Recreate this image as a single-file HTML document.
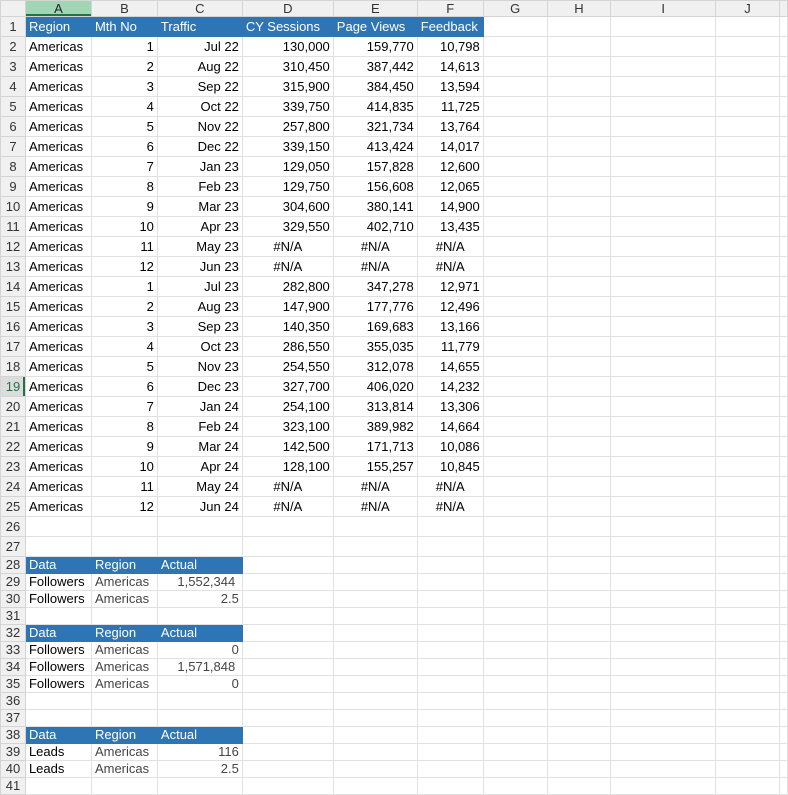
<!DOCTYPE html>
<html><head><meta charset="utf-8"><style>
body{margin:0;background:#fff;width:788px;height:781px;overflow:hidden;font-family:"Liberation Sans",Arial,sans-serif;font-size:13px;color:#000}
table{border-collapse:collapse;table-layout:fixed;position:absolute;left:0;top:0}
td{border:1px solid #e1e1e1;padding:0 3px;height:19px;white-space:nowrap;overflow:visible;line-height:19px}
tr.s td{height:16px;line-height:16px}
tr.h td{height:15px;line-height:15px;background:#f0f0f0;color:#333;text-align:center;border-color:#d4d4d4;font-size:13px}
td.rh{background:#f0f0f0;color:#333;text-align:center;padding:0;border-color:#d4d4d4}
tr.h td.sel{background:#a0d6b4;color:#222;box-shadow:inset 0 -2px 0 #217346}
td.rsel{background:#dcdcdc;color:#217346;box-shadow:inset -2px 0 0 #217346}
.b{background:#2e75b6;color:#fff;border-color:#2e75b6}
.r{text-align:right}
.c{text-align:center}
.g{color:#444}
</style></head><body>
<table>
<colgroup><col style="width:25px"><col style="width:66px"><col style="width:66px"><col style="width:85px"><col style="width:91px"><col style="width:84px"><col style="width:66px"><col style="width:64px"><col style="width:64px"><col style="width:105px"><col style="width:64px"><col style="width:8px"></colgroup>
<tr class="h"><td></td><td class="sel">A</td><td>B</td><td>C</td><td>D</td><td>E</td><td>F</td><td>G</td><td>H</td><td>I</td><td>J</td><td></td></tr>
<tr><td class="rh">1</td><td class="b">Region</td><td class="b">Mth No</td><td class="b">Traffic</td><td class="b">CY Sessions</td><td class="b">Page Views</td><td class="b">Feedback</td><td></td><td></td><td></td><td></td><td></td></tr>
<tr><td class="rh">2</td><td>Americas</td><td class="r">1</td><td class="r">Jul 22</td><td class="r">130,000</td><td class="r">159,770</td><td class="r">10,798</td><td></td><td></td><td></td><td></td><td></td></tr>
<tr><td class="rh">3</td><td>Americas</td><td class="r">2</td><td class="r">Aug 22</td><td class="r">310,450</td><td class="r">387,442</td><td class="r">14,613</td><td></td><td></td><td></td><td></td><td></td></tr>
<tr><td class="rh">4</td><td>Americas</td><td class="r">3</td><td class="r">Sep 22</td><td class="r">315,900</td><td class="r">384,450</td><td class="r">13,594</td><td></td><td></td><td></td><td></td><td></td></tr>
<tr><td class="rh">5</td><td>Americas</td><td class="r">4</td><td class="r">Oct 22</td><td class="r">339,750</td><td class="r">414,835</td><td class="r">11,725</td><td></td><td></td><td></td><td></td><td></td></tr>
<tr><td class="rh">6</td><td>Americas</td><td class="r">5</td><td class="r">Nov 22</td><td class="r">257,800</td><td class="r">321,734</td><td class="r">13,764</td><td></td><td></td><td></td><td></td><td></td></tr>
<tr><td class="rh">7</td><td>Americas</td><td class="r">6</td><td class="r">Dec 22</td><td class="r">339,150</td><td class="r">413,424</td><td class="r">14,017</td><td></td><td></td><td></td><td></td><td></td></tr>
<tr><td class="rh">8</td><td>Americas</td><td class="r">7</td><td class="r">Jan 23</td><td class="r">129,050</td><td class="r">157,828</td><td class="r">12,600</td><td></td><td></td><td></td><td></td><td></td></tr>
<tr><td class="rh">9</td><td>Americas</td><td class="r">8</td><td class="r">Feb 23</td><td class="r">129,750</td><td class="r">156,608</td><td class="r">12,065</td><td></td><td></td><td></td><td></td><td></td></tr>
<tr><td class="rh">10</td><td>Americas</td><td class="r">9</td><td class="r">Mar 23</td><td class="r">304,600</td><td class="r">380,141</td><td class="r">14,900</td><td></td><td></td><td></td><td></td><td></td></tr>
<tr><td class="rh">11</td><td>Americas</td><td class="r">10</td><td class="r">Apr 23</td><td class="r">329,550</td><td class="r">402,710</td><td class="r">13,435</td><td></td><td></td><td></td><td></td><td></td></tr>
<tr><td class="rh">12</td><td>Americas</td><td class="r">11</td><td class="r">May 23</td><td class="c">#N/A</td><td class="c">#N/A</td><td class="c">#N/A</td><td></td><td></td><td></td><td></td><td></td></tr>
<tr><td class="rh">13</td><td>Americas</td><td class="r">12</td><td class="r">Jun 23</td><td class="c">#N/A</td><td class="c">#N/A</td><td class="c">#N/A</td><td></td><td></td><td></td><td></td><td></td></tr>
<tr><td class="rh">14</td><td>Americas</td><td class="r">1</td><td class="r">Jul 23</td><td class="r">282,800</td><td class="r">347,278</td><td class="r">12,971</td><td></td><td></td><td></td><td></td><td></td></tr>
<tr><td class="rh">15</td><td>Americas</td><td class="r">2</td><td class="r">Aug 23</td><td class="r">147,900</td><td class="r">177,776</td><td class="r">12,496</td><td></td><td></td><td></td><td></td><td></td></tr>
<tr><td class="rh">16</td><td>Americas</td><td class="r">3</td><td class="r">Sep 23</td><td class="r">140,350</td><td class="r">169,683</td><td class="r">13,166</td><td></td><td></td><td></td><td></td><td></td></tr>
<tr><td class="rh">17</td><td>Americas</td><td class="r">4</td><td class="r">Oct 23</td><td class="r">286,550</td><td class="r">355,035</td><td class="r">11,779</td><td></td><td></td><td></td><td></td><td></td></tr>
<tr><td class="rh">18</td><td>Americas</td><td class="r">5</td><td class="r">Nov 23</td><td class="r">254,550</td><td class="r">312,078</td><td class="r">14,655</td><td></td><td></td><td></td><td></td><td></td></tr>
<tr><td class="rh rsel">19</td><td>Americas</td><td class="r">6</td><td class="r">Dec 23</td><td class="r">327,700</td><td class="r">406,020</td><td class="r">14,232</td><td></td><td></td><td></td><td></td><td></td></tr>
<tr><td class="rh">20</td><td>Americas</td><td class="r">7</td><td class="r">Jan 24</td><td class="r">254,100</td><td class="r">313,814</td><td class="r">13,306</td><td></td><td></td><td></td><td></td><td></td></tr>
<tr><td class="rh">21</td><td>Americas</td><td class="r">8</td><td class="r">Feb 24</td><td class="r">323,100</td><td class="r">389,982</td><td class="r">14,664</td><td></td><td></td><td></td><td></td><td></td></tr>
<tr><td class="rh">22</td><td>Americas</td><td class="r">9</td><td class="r">Mar 24</td><td class="r">142,500</td><td class="r">171,713</td><td class="r">10,086</td><td></td><td></td><td></td><td></td><td></td></tr>
<tr><td class="rh">23</td><td>Americas</td><td class="r">10</td><td class="r">Apr 24</td><td class="r">128,100</td><td class="r">155,257</td><td class="r">10,845</td><td></td><td></td><td></td><td></td><td></td></tr>
<tr><td class="rh">24</td><td>Americas</td><td class="r">11</td><td class="r">May 24</td><td class="c">#N/A</td><td class="c">#N/A</td><td class="c">#N/A</td><td></td><td></td><td></td><td></td><td></td></tr>
<tr><td class="rh">25</td><td>Americas</td><td class="r">12</td><td class="r">Jun 24</td><td class="c">#N/A</td><td class="c">#N/A</td><td class="c">#N/A</td><td></td><td></td><td></td><td></td><td></td></tr>
<tr><td class="rh">26</td><td></td><td></td><td></td><td></td><td></td><td></td><td></td><td></td><td></td><td></td><td></td></tr>
<tr><td class="rh">27</td><td></td><td></td><td></td><td></td><td></td><td></td><td></td><td></td><td></td><td></td><td></td></tr>
<tr class="s"><td class="rh">28</td><td class="b">Data</td><td class="b">Region</td><td class="b">Actual</td><td></td><td></td><td></td><td></td><td></td><td></td><td></td><td></td></tr>
<tr class="s"><td class="rh">29</td><td>Followers</td><td class="g">Americas</td><td class="r g">1,552,344&nbsp;</td><td></td><td></td><td></td><td></td><td></td><td></td><td></td><td></td></tr>
<tr class="s"><td class="rh">30</td><td>Followers</td><td class="g">Americas</td><td class="r g">2.5</td><td></td><td></td><td></td><td></td><td></td><td></td><td></td><td></td></tr>
<tr class="s"><td class="rh">31</td><td></td><td></td><td></td><td></td><td></td><td></td><td></td><td></td><td></td><td></td><td></td></tr>
<tr class="s"><td class="rh">32</td><td class="b">Data</td><td class="b">Region</td><td class="b">Actual</td><td></td><td></td><td></td><td></td><td></td><td></td><td></td><td></td></tr>
<tr class="s"><td class="rh">33</td><td>Followers</td><td class="g">Americas</td><td class="r g">0</td><td></td><td></td><td></td><td></td><td></td><td></td><td></td><td></td></tr>
<tr class="s"><td class="rh">34</td><td>Followers</td><td class="g">Americas</td><td class="r g">1,571,848&nbsp;</td><td></td><td></td><td></td><td></td><td></td><td></td><td></td><td></td></tr>
<tr class="s"><td class="rh">35</td><td>Followers</td><td class="g">Americas</td><td class="r g">0</td><td></td><td></td><td></td><td></td><td></td><td></td><td></td><td></td></tr>
<tr class="s"><td class="rh">36</td><td></td><td></td><td></td><td></td><td></td><td></td><td></td><td></td><td></td><td></td><td></td></tr>
<tr class="s"><td class="rh">37</td><td></td><td></td><td></td><td></td><td></td><td></td><td></td><td></td><td></td><td></td><td></td></tr>
<tr class="s"><td class="rh">38</td><td class="b">Data</td><td class="b">Region</td><td class="b">Actual</td><td></td><td></td><td></td><td></td><td></td><td></td><td></td><td></td></tr>
<tr class="s"><td class="rh">39</td><td>Leads</td><td class="g">Americas</td><td class="r g">116</td><td></td><td></td><td></td><td></td><td></td><td></td><td></td><td></td></tr>
<tr class="s"><td class="rh">40</td><td>Leads</td><td class="g">Americas</td><td class="r g">2.5</td><td></td><td></td><td></td><td></td><td></td><td></td><td></td><td></td></tr>
<tr class="s"><td class="rh">41</td><td></td><td></td><td></td><td></td><td></td><td></td><td></td><td></td><td></td><td></td><td></td></tr>
</table>
</body></html>
